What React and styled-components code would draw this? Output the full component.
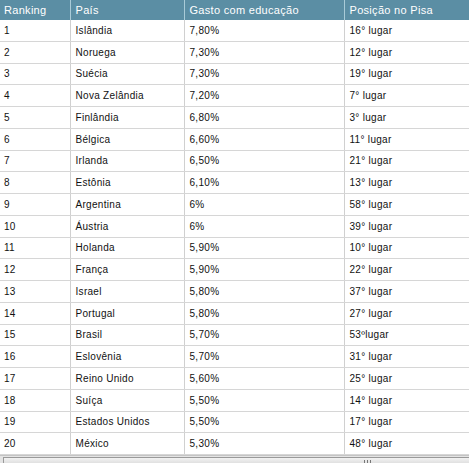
import React from 'react';
import styled, { createGlobalStyle } from 'styled-components';

const Global = createGlobalStyle`
    html, body {
        margin: 0;
        padding: 0;
        background: #fff;
    }
    body {
        width: 469px;
        height: 463px;
        overflow: hidden;
    }
`;

const Frame = styled.div`
    width: 469px;
    height: 463px;
    display: flex;
    flex-direction: column;
    font-family: 'Liberation Sans', Arial, sans-serif;
    color: #111;
`;

const Table = styled.table`
    width: 469px;
    border-collapse: collapse;
    table-layout: fixed;
`;

const Head = styled.th`
    height: 20px;
    padding: 0 0 0 ${(p) => p.$pad || 5}px;
    background: #5b8ea4;
    color: #fff;
    font-size: 11px;
    letter-spacing: 0.3px;
    font-weight: normal;
    text-align: left;
    border-left: 1px solid #a9cbd8;
    &:first-child {
        border-left: none;
    }
`;

const Cell = styled.td`
    height: 20.75px;
    padding: 0 0 0 ${(p) => p.$pad || 5}px;
    font-size: 10px;
    letter-spacing: 0.3px;
    border-bottom: 1px solid #d6d6d6;
    border-left: 1px solid #d0d0d0;
    &:first-child {
        border-left: none;
    }
`;

const Scroll = styled.div`
    flex: 1;
    display: flex;
    align-items: stretch;
    padding: 1px 0 0 3px;
    background: #e4e4e4;
    border-top: 1px solid #c4c4c4;
`;

const Thumb = styled.div`
    flex: 1;
    display: flex;
    align-items: flex-start;
    padding: 2px 0 0 360px;
    background: linear-gradient(#f2f2f2, #d9d9d9);
    border-left: 1px solid #9a9a9a;
    border-top: 1px solid #9a9a9a;
`;

const Grip = styled.div`
    display: flex;
    gap: 2px;
    & > span {
        width: 1px;
        height: 5px;
        background: #777;
    }
`;

const rows = [
    ['1', 'Islândia', '7,80%', '16° lugar'],
    ['2', 'Noruega', '7,30%', '12° lugar'],
    ['3', 'Suécia', '7,30%', '19° lugar'],
    ['4', 'Nova Zelândia', '7,20%', '7° lugar'],
    ['5', 'Finlândia', '6,80%', '3° lugar'],
    ['6', 'Bélgica', '6,60%', '11° lugar'],
    ['7', 'Irlanda', '6,50%', '21° lugar'],
    ['8', 'Estônia', '6,10%', '13° lugar'],
    ['9', 'Argentina', '6%', '58° lugar'],
    ['10', 'Áustria', '6%', '39° lugar'],
    ['11', 'Holanda', '5,90%', '10° lugar'],
    ['12', 'França', '5,90%', '22° lugar'],
    ['13', 'Israel', '5,80%', '37° lugar'],
    ['14', 'Portugal', '5,80%', '27° lugar'],
    ['15', 'Brasil', '5,70%', '53ºlugar'],
    ['16', 'Eslovênia', '5,70%', '31° lugar'],
    ['17', 'Reino Unido', '5,60%', '25° lugar'],
    ['18', 'Suíça', '5,50%', '14° lugar'],
    ['19', 'Estados Unidos', '5,50%', '17° lugar'],
    ['20', 'México', '5,30%', '48° lugar'],
];

export default function App() {
    return (
        <Frame>
            <Global />
            <Table>
                <colgroup>
                    <col style={{ width: 70 }} />
                    <col style={{ width: 114 }} />
                    <col style={{ width: 160 }} />
                    <col style={{ width: 125 }} />
                </colgroup>
                <thead>
                    <tr>
                        <Head $pad={4}>Ranking</Head>
                        <Head>País</Head>
                        <Head>Gasto com educação</Head>
                        <Head>Posição no Pisa</Head>
                    </tr>
                </thead>
                <tbody>
                    {rows.map((r) => (
                        <tr key={r[0]}>
                            <Cell $pad={4}>{r[0]}</Cell>
                            <Cell>{r[1]}</Cell>
                            <Cell>{r[2]}</Cell>
                            <Cell>{r[3]}</Cell>
                        </tr>
                    ))}
                </tbody>
            </Table>
            <Scroll>
                <Thumb>
                    <Grip>
                        <span />
                        <span />
                        <span />
                    </Grip>
                </Thumb>
            </Scroll>
        </Frame>
    );
}
